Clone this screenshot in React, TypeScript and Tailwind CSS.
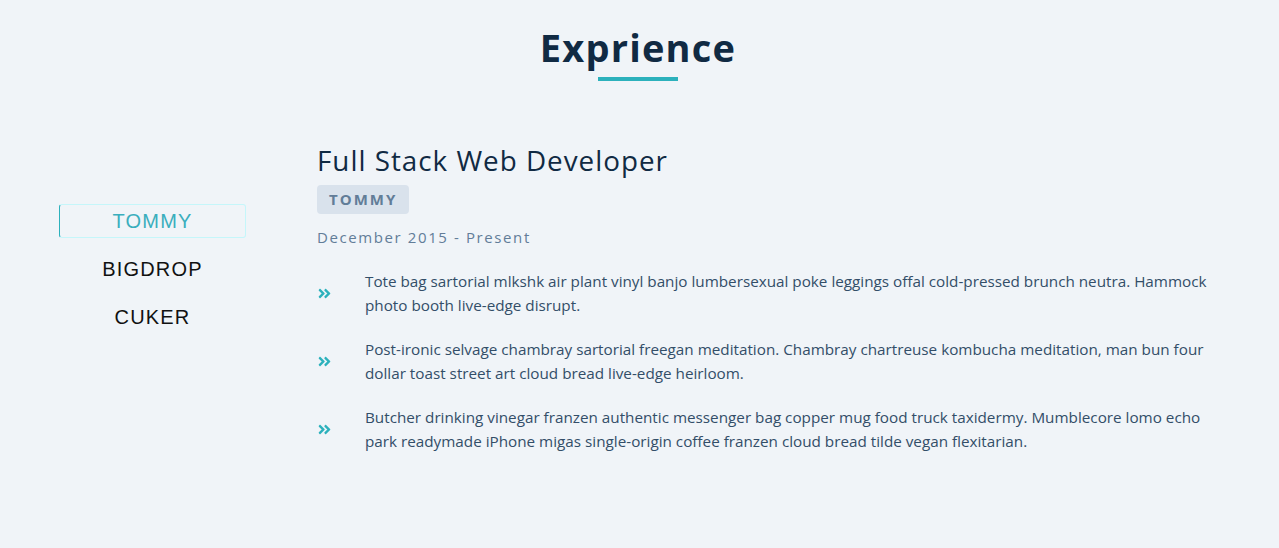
import React, { useState } from 'react';
import { FaAngleDoubleRight } from 'react-icons/fa';

const companies = ['TOMMY', 'BIGDROP', 'CUKER'];

const duties = [
  'Tote bag sartorial mlkshk air plant vinyl banjo lumbersexual poke leggings offal cold-pressed brunch neutra. Hammock photo booth live-edge disrupt.',
  'Post-ironic selvage chambray sartorial freegan meditation. Chambray chartreuse kombucha meditation, man bun four dollar toast street art cloud bread live-edge heirloom.',
  'Butcher drinking vinegar franzen authentic messenger bag copper mug food truck taxidermy. Mumblecore lomo echo park readymade iPhone migas single-origin coffee franzen cloud bread tilde vegan flexitarian.',
];

export default function App() {
  const [active, setActive] = useState(0);

  return (
    <div className="min-h-[548px] bg-[#f0f4f8] font-['Open_Sans',sans-serif]">
      {/* Title */}
      <div className="flex flex-col items-center pt-[24px]">
        <h2 className="pr-[3px] text-[38px] leading-[46px] font-bold tracking-[1.2px] text-[#102a43]">Exprience</h2>
        <div className="mt-[7px] mr-[3px] h-[4px] w-[80px] bg-[#2cb1bc]" />
      </div>

      <div className="flex pl-[59px] pr-[54px] pt-[62px]">
        {/* Companies */}
        <div className="flex w-[187px] shrink-0 flex-col pt-[61px] font-['Liberation_Sans',Arial,sans-serif]">
          {companies.map((c, i) => (
            <button
              key={c}
              onClick={() => setActive(i)}
              className={`mb-[14px] h-[34px] rounded-[3px] text-[20px] tracking-[1.2px] ${
                i === active
                  ? 'border border-[#c5f6fa] border-l-[#2cb1bc] text-[#3aaebd]'
                  : 'border border-transparent text-[#111]'
              }`}
            >
              {c}
            </button>
          ))}
        </div>

        {/* Job */}
        <article className="ml-[71px] flex-1">
          <h3 className="text-[27.8px] leading-[34px] tracking-[1px] text-[#102a43]">Full Stack Web Developer</h3>
          <span className="mt-[8px] inline-block rounded-[4px] bg-[#d9e2ec] px-[12px] py-[3px] text-[15px] font-bold tracking-[2px] text-[#627d98]">
            TOMMY
          </span>
          <p className="mt-[12px] text-[15px] tracking-[1.6px] text-[#627d98]">December 2015 - Present</p>

          <div className="mt-[21px] flex flex-col gap-[20px]">
            {duties.map((d, i) => (
              <div key={i} className="flex items-center">
                <div className="w-[48px] shrink-0">
                  <FaAngleDoubleRight className="text-[15px] text-[#2cb1bc]" />
                </div>
                <p className="text-[15.25px] leading-[24px] text-[#334e68]">{d}</p>
              </div>
            ))}
          </div>
        </article>
      </div>
    </div>
  );
}
